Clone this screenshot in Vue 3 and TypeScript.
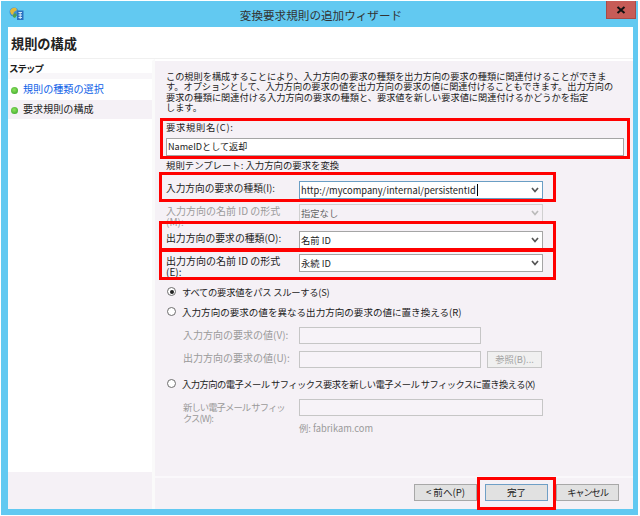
<script setup lang="ts">
const intro: string[] = [
  'この規則を構成することにより、入力方向の要求の種類を出力方向の要求の種類に関連付けることができま',
  'す。オプションとして、入力方向の要求の値を出力方向の要求の値に関連付けることもできます。出力方向の',
  '要求の種類に関連付ける入力方向の要求の種類と、要求値を新しい要求値に関連付けるかどうかを指定',
  'します。',
]
</script>

<template>
  <div class="window">
    <header class="titlebar">
      <svg class="app-icon" width="16" height="14" viewBox="0 0 16 14">
        <circle cx="5" cy="5" r="4.5" fill="#3f8fd0" />
        <path d="M1 4 C2 1 5 0 7 1 L8 3 L5 5 L4 8 L2 7 Z" fill="#e2b93a" />
        <path d="M4 8 L6 6 L8 8 L6 11 L4 10 Z" fill="#4fa04f" />
        <path d="M8 3.5 H14.5 V13 H8 Z" fill="#2a72c0" />
        <path d="M9.5 5.5 H13 M9.5 8 H13 M9.5 10.5 H13 M11.2 5 V12" stroke="#cfe8fa" stroke-width="1" fill="none" />
      </svg>
      <div class="title">変換要求規則の追加ウィザード</div>
      <div class="close">
        <svg width="10" height="8" viewBox="0 0 10 8">
          <path d="M1.5 1 L8.5 7 M8.5 1 L1.5 7" stroke="#111" stroke-width="2" />
        </svg>
      </div>
    </header>

    <main class="client">
      <div class="pagehead">規則の構成</div>
      <div class="columns">
        <aside class="steps">
          <div class="steps-title">ステップ</div>
          <div class="steps-band"></div>
          <div class="step step-link"><i class="dot"></i>規則の種類の選択</div>
          <div class="step step-current"><i class="dot"></i>要求規則の構成</div>
          <div class="steps-fill"></div>
          <div class="steps-foot"></div>
        </aside>

        <section class="panel">
          <div class="content">
            <p class="intro"><span v-for="line in intro" :key="line">{{ line }}</span></p>

            <div class="label rule-name">要求規則名(C):</div>
            <div class="box wide">NameIDとして返却</div>
            <div class="label template">規則テンプレート: 入力方向の要求を変換</div>

            <div class="row row-in">
              <div class="label">入力方向の要求の種類(I):</div>
              <div class="box combo focus">
                <span class="value">http://mycompany/internal/persistentId<b class="caret"></b></span>
                <svg width="8" height="6" viewBox="0 0 8 6"><path d="M1 1 L4 4.5 L7 1" fill="none" stroke="#555" stroke-width="1.7" /></svg>
              </div>
            </div>
            <div class="row row-fmt">
              <div class="label off">入力方向の名前 ID の形式<br />(M):</div>
              <div class="box combo disabled">
                <span class="value">指定なし</span>
                <svg width="8" height="6" viewBox="0 0 8 6"><path d="M1 1 L4 4.5 L7 1" fill="none" stroke="#bbb" stroke-width="1.7" /></svg>
              </div>
            </div>
            <div class="row row-out">
              <div class="label">出力方向の要求の種類(O):</div>
              <div class="box combo">
                <span class="value">名前 ID</span>
                <svg width="8" height="6" viewBox="0 0 8 6"><path d="M1 1 L4 4.5 L7 1" fill="none" stroke="#555" stroke-width="1.7" /></svg>
              </div>
            </div>
            <div class="row row-ofmt">
              <div class="label">出力方向の名前 ID の形式<br />(E):</div>
              <div class="box combo">
                <span class="value">永続 ID</span>
                <svg width="8" height="6" viewBox="0 0 8 6"><path d="M1 1 L4 4.5 L7 1" fill="none" stroke="#555" stroke-width="1.7" /></svg>
              </div>
            </div>

            <div class="radio r1"><i class="circle on"></i>すべての要求値をパス スルーする(S)</div>
            <div class="radio r2"><i class="circle"></i>入力方向の要求の値を異なる出力方向の要求の値に置き換える(R)</div>

            <div class="sub s1">
              <div class="label off">入力方向の要求の値(V):</div>
              <div class="box plain short"></div>
            </div>
            <div class="sub s2">
              <div class="label off">出力方向の要求の値(U):</div>
              <div class="box plain short"></div>
              <div class="browse">参照(B)...</div>
            </div>

            <div class="radio r3"><i class="circle"></i>入力方向の電子メール サフィックス要求を新しい電子メール サフィックスに置き換える(X)</div>

            <div class="sub s3">
              <div class="label off suffix">新しい電子メール サフィッ<br />クス(W):</div>
              <div class="box plain long"></div>
            </div>
            <div class="example">例: fabrikam.com</div>
          </div>

          <footer class="actions">
            <button class="btn">&lt; 前へ(P)</button>
            <button class="btn primary">完了</button>
            <button class="btn cancel">キャンセル</button>
          </footer>
        </section>
      </div>
    </main>

    <div class="hl hl-name"></div>
    <div class="hl hl-in"></div>
    <div class="hl hl-out"></div>
    <div class="hl hl-fmt"></div>
    <div class="hl hl-done"></div>
  </div>
</template>

<style>
html, body { margin: 0; background: #fff; }
</style>

<style scoped>
.window {
  position: relative;
  box-sizing: border-box;
  width: 637px;
  height: 514px;
  margin: 1px 0 0 1px;
  background: #62c9f1;
  display: flex;
  flex-direction: column;
  padding: 0 5px 6px 7px;
  font-family: "Noto Sans CJK JP", "Noto Sans", sans-serif;
  font-size: 9.3px;
  line-height: 10.7px;
  color: #1c1c1c;
  overflow: hidden;
}
.titlebar { height: 26px; flex: none; display: flex; position: relative; align-items: flex-start; justify-content: center; }
.app-icon { position: absolute; left: 1px; top: 6px; }
.title { font-size: 11.6px; line-height: 16px; margin-top: 6px; margin-left: 1px; color: #333; }
.close { position: absolute; right: -3px; top: 0; width: 30px; height: 18px; background: #c75c57; border: 1px solid #a94a46; border-top: 0; box-sizing: border-box; display: flex; align-items: center; justify-content: center; }

.client { flex: 1; min-height: 0; display: flex; flex-direction: column; background: #fff; }
.pagehead { height: 32px; flex: none; box-sizing: border-box; padding: 9px 0 0 3px; font-size: 13.2px; line-height: 15px; font-weight: 700; color: #222; border-bottom: 1px solid #f0f0f0; }

.columns { flex: 1; min-height: 0; display: flex; }
.steps { width: 144px; flex: none; display: flex; flex-direction: column; border-right: 3px solid #fafafa; border-top: 2px solid #fff; }
.steps-title { height: 10px; padding: 2px 0 0 1px; box-sizing: content-box; font-weight: 700; line-height: 10px; font-size: 9.5px; letter-spacing: -1px; }
.steps-band { height: 6px; flex: none; background: #f8f6f9; }
.step { height: 20px; flex: none; display: flex; align-items: center; padding-left: 15px; position: relative; font-size: 10.1px; }
.step-link { color: #0e5fe8; height: 21px; }
.step-current { background: #f5f1f6; height: 19px; }
.dot { position: absolute; left: 3px; top: 50%; width: 7px; height: 7px; margin-top: -3px; border-radius: 50%; border: 0; background: radial-gradient(circle at 45% 40%, #8fe45f, #2f9d22); }
.steps-fill { flex: 1; }
.steps-foot { height: 37px; flex: none; background: #f5f1f6; }

.panel { flex: 1; min-width: 0; display: flex; flex-direction: column; background: #f5f1f6; border-top: 2px solid #fff; }
.content { flex: 1; min-height: 0; padding: 9.5px 0 0 11px; }
.intro { margin: 0; height: 40.5px; font-size: 9.2px; line-height: 10.5px; }
.intro span { display: block; white-space: nowrap; }

.label { white-space: nowrap; }
.rule-name { margin-top: 9px; height: 14px; line-height: 11px; padding-top: 2px; box-sizing: border-box; font-size: 9.3px; letter-spacing: 0.7px; }
.box { box-sizing: border-box; background: #fff; border: 1px solid #a5a5a5; }
.wide { width: 458px; height: 18px; margin-top: 4px; padding-left: 1px; line-height: 14px; font-size: 9.1px; }
.template { margin-top: 3px; height: 13px; line-height: 12px; font-size: 9.4px; }

.row { display: grid; grid-template-columns: 133px 244px; align-items: start; font-size: 9.3px; }
.row .label { font-size: 9.7px; }
.row-in { margin-top: 9px; }
.row-fmt { margin-top: 5px; }
.row-out { margin-top: 9px; }
.row-ofmt { margin-top: 5px; }
.row .label { padding-top: 2px; }
.row-out .label { font-size: 9.85px; }
.row-ofmt .label, .row-fmt .label { padding-top: 2px; height: 16px; font-size: 10px; }
.combo { height: 18px; display: flex; align-items: center; justify-content: space-between; padding: 0 3px 0 1px; }
.value { white-space: nowrap; display: flex; align-items: center; }
.focus { border-color: #6a9ec4; }
.caret { display: inline-block; width: 1px; height: 12px; background: #000; margin-left: 1px; }
.disabled { background: #f5f1f6; border-color: #d0d0d0; color: #666; }
.off { color: #9a9a9a; }

.radio { position: relative; padding-left: 16px; white-space: nowrap; height: 13px; line-height: 13px; }
.r1 { margin-top: 14px; letter-spacing: -0.26px; }
.r2 { margin-top: 7px; font-size: 9.55px; }
.r3 { margin-top: 10px; letter-spacing: -0.55px; }
.circle { position: absolute; left: 1px; top: 1px; width: 9px; height: 9px; box-sizing: border-box; border: 1px solid #6d6d6d; border-radius: 50%; background: #fff; }
.circle.on::after { content: ""; position: absolute; left: 1.5px; top: 1.5px; width: 4px; height: 4px; border-radius: 50%; background: #222; }

.sub { display: flex; align-items: flex-start; padding-left: 17px; font-size: 10px; }
.sub .label { width: 116px; flex: none; padding-top: 3px; }
.s1 { margin-top: 8px; }
.s2 { margin-top: 7px; }
.s2 .label { padding-top: 2px; }
.s3 { margin-top: 8px; }
.sub .suffix { font-size: 9.3px; letter-spacing: -0.9px; height: 14px; }
.plain { border-color: #c6c6c6; height: 17px; background: #f7f3f8; }
.short { width: 182px; }
.long { width: 244px; }
.browse { width: 55px; height: 17px; margin: 0 0 0 6px; box-sizing: border-box; border: 1px solid #c6c6c6; background: #f0f0f0; color: #a0a0a0; text-align: center; line-height: 14px; font-size: 9.3px; }
.example { margin: 6px 0 0 133px; color: #9a9a9a; line-height: 12px; }

.actions { flex: none; height: 33px; box-sizing: border-box; border-top: 2px solid #faf8fb; display: flex; justify-content: flex-end; gap: 8px; padding: 6px 14px 0 0; }
.btn { width: 63px; height: 16.5px; padding: 0; box-sizing: border-box; border: 1px solid #a8a8a8; background: #e1e1e1; font: inherit; font-size: 9.6px; color: #222; line-height: 14px; }
.primary { border-color: #6f9fc6; }
.cancel { font-size: 9.3px; letter-spacing: -1.2px; }

.hl { position: absolute; box-sizing: border-box; border: 3px solid #f00; pointer-events: none; }
.hl-name { left: 159px; top: 117px; width: 470px; height: 41px; }
.hl-in { left: 158px; top: 171px; width: 397px; height: 30px; }
.hl-out { left: 158px; top: 220px; width: 397px; height: 30px; }
.hl-fmt { left: 158px; top: 248px; width: 397px; height: 31px; }
.hl-done { left: 476px; top: 476px; width: 79px; height: 33px; }
</style>
